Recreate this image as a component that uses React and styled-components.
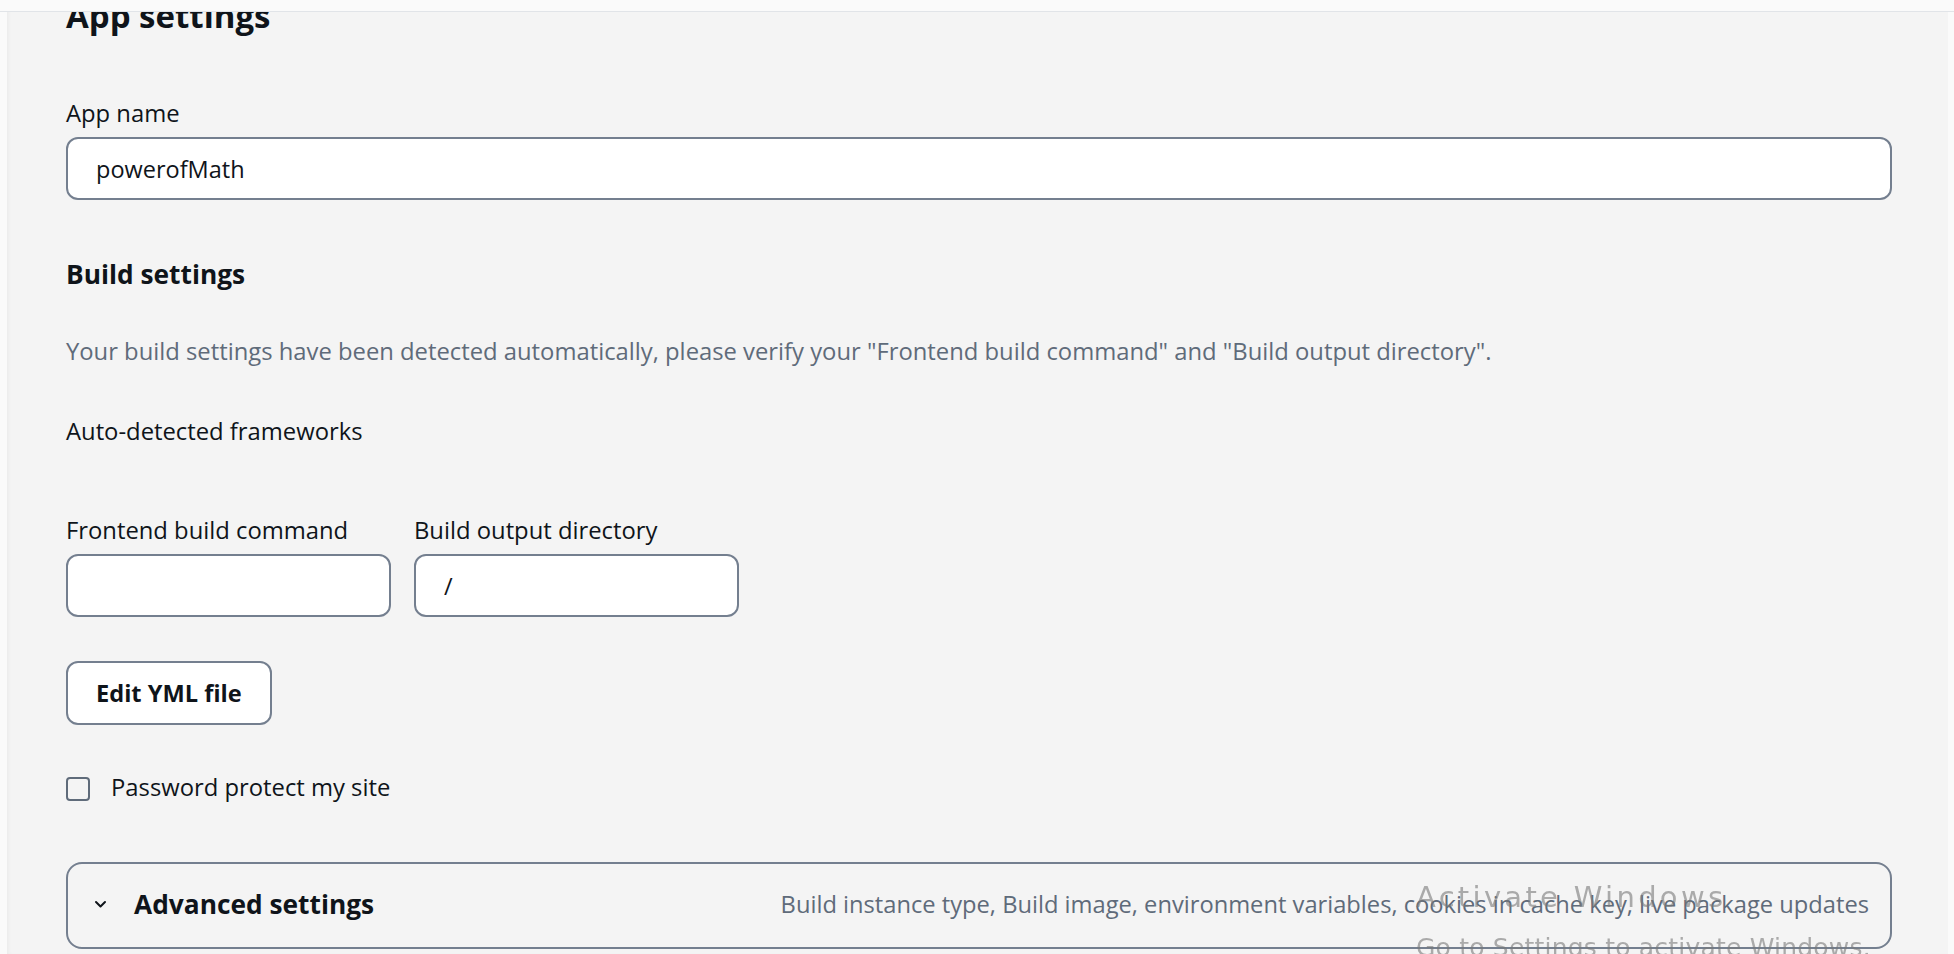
import React from 'react';
import styled, { createGlobalStyle } from 'styled-components';

const colors = {
    page: '#f4f4f4',
    chrome: '#fafafa',
    text: '#0f141a',
    muted: '#5f6b7a',
    border: '#747f8f',
    white: '#ffffff',
};

const GlobalStyle = createGlobalStyle`
    html, body {
        margin: 0;
        padding: 0;
        background: ${colors.page};
        overflow: hidden;
    }
    body {
        font-family: "Open Sans", "Noto Sans", sans-serif;
        color: ${colors.text};
    }
    * { box-sizing: border-box; }
`

const TopBar = styled.div`
    position: fixed;
    top: 0;
    left: 0;
    right: 0;
    height: 12px;
    background: ${colors.chrome};
    border-bottom: 1px solid #e1e4e8;
    z-index: 10;
`

const Shell = styled.div`
    display: flex;
    min-height: 954px;
`

const Gutter = styled.div`
    width: ${props => props.width}px;
    flex-shrink: 0;
    background: ${colors.chrome};
`

const Main = styled.main`
    flex: 1;
    padding: 0 56px 0 59px;
    box-shadow: inset 3px 0 4px -2px rgba(0, 0, 0, 0.05);
`

const Heading = styled.h2`
    margin: 0;
    font-size: 33px;
    line-height: 32px;
    font-weight: 700;
`

const SubHeading = styled.h3`
    margin: ${props => props.mt}px 0 0;
    font-size: 26.3px;
    line-height: 32px;
    font-weight: 700;
`

const Text = styled.p`
    margin: ${props => props.mt}px 0 0;
    font-size: 23.8px;
    line-height: 32px;
    color: ${props => (props.muted ? colors.muted : colors.text)};
`

const Field = styled.div`
    display: flex;
    flex-direction: column;
    gap: 8px;
    margin-top: ${props => props.mt || 0}px;
    width: ${props => (props.width ? props.width + 'px' : 'auto')};
`

const Label = styled.label`
    font-size: 23.8px;
    line-height: 32px;
`

const Input = styled.input`
    height: 63px;
    width: 100%;
    padding: 0 28px;
    border: 2.5px solid ${colors.border};
    border-radius: 12px;
    background: ${colors.white};
    font-family: inherit;
    font-size: 23.5px;
    color: ${colors.text};
    outline: none;
`

const FieldRow = styled.div`
    display: flex;
    gap: 23px;
    margin-top: ${props => props.mt}px;
`

const Button = styled.button`
    display: inline-flex;
    align-items: center;
    height: 64px;
    margin-top: 44px;
    padding: 0 28px;
    border: 2.5px solid ${colors.border};
    border-radius: 12px;
    background: ${colors.white};
    font-family: inherit;
    font-size: 23.6px;
    font-weight: 700;
    color: ${colors.text};
`

const CheckRow = styled.label`
    display: flex;
    align-items: center;
    gap: 21px;
    margin-top: 46px;
    font-size: 23.8px;
    line-height: 32px;
`

const Box = styled.span`
    width: 24px;
    height: 24px;
    margin-top: 3px;
    border: 2.5px solid ${colors.muted};
    border-radius: 4px;
    background: transparent;
    flex-shrink: 0;
`

const Expander = styled.div`
    display: flex;
    align-items: center;
    height: 87px;
    margin-top: 59px;
    padding: 0 21px 3px 26px;
    border: 2px solid ${colors.border};
    border-radius: 16px;
`

const Chevron = styled.svg`
    width: 13px;
    height: 9px;
    margin-right: 27px;
    flex-shrink: 0;
`

const ExpanderTitle = styled.span`
    font-size: 26.3px;
    font-weight: 700;
    line-height: 32px;
`

const ExpanderInfo = styled.span`
    margin-left: auto;
    font-size: 23.7px;
    color: ${colors.muted};
`

const Watermark = styled.div`
    position: fixed;
    left: 1416px;
    top: 883px;
    display: flex;
    flex-direction: column;
    gap: 23px;
    font-family: "DejaVu Sans", sans-serif;
    color: rgba(120, 120, 120, 0.6);
    pointer-events: none;
    z-index: 20;
`

const WatermarkLine = styled.span`
    font-size: ${props => props.size}px;
    line-height: ${props => props.size}px;
    letter-spacing: ${props => props.spacing}px;
    white-space: nowrap;
`

export default function App() {
    return (
        <>
            <GlobalStyle />
            <TopBar />
            <Shell>
                <Gutter width={7} />
                <Main>
                    <Heading>App settings</Heading>

                    <Field mt={65}>
                        <Label>App name</Label>
                        <Input defaultValue="powerofMath" />
                    </Field>

                    <SubHeading mt={58}>Build settings</SubHeading>
                    <Text muted mt={45}>
                        Your build settings have been detected automatically, please verify your "Frontend build command" and "Build output directory".
                    </Text>
                    <Text mt={48}>Auto-detected frameworks</Text>

                    <FieldRow mt={67}>
                        <Field width={325}>
                            <Label>Frontend build command</Label>
                            <Input defaultValue="" />
                        </Field>
                        <Field width={325}>
                            <Label>Build output directory</Label>
                            <Input defaultValue="/" />
                        </Field>
                    </FieldRow>

                    <Button>Edit YML file</Button>

                    <CheckRow>
                        <Box />
                        Password protect my site
                    </CheckRow>

                    <Expander>
                        <Chevron viewBox="0 0 13 9">
                            <polyline points="2,2 6.5,6.5 11,2" fill="none" stroke={colors.text} strokeWidth="2" strokeLinecap="round" strokeLinejoin="round" />
                        </Chevron>
                        <ExpanderTitle>Advanced settings</ExpanderTitle>
                        <ExpanderInfo>Build instance type, Build image, environment variables, cookies in cache key, live package updates</ExpanderInfo>
                    </Expander>
                </Main>
                <Gutter width={6} />
            </Shell>
            <Watermark>
                <WatermarkLine size={29} spacing={3.3}>Activate Windows</WatermarkLine>
                <WatermarkLine size={25} spacing={0.2}>Go to Settings to activate Windows.</WatermarkLine>
            </Watermark>
        </>
    );
}
